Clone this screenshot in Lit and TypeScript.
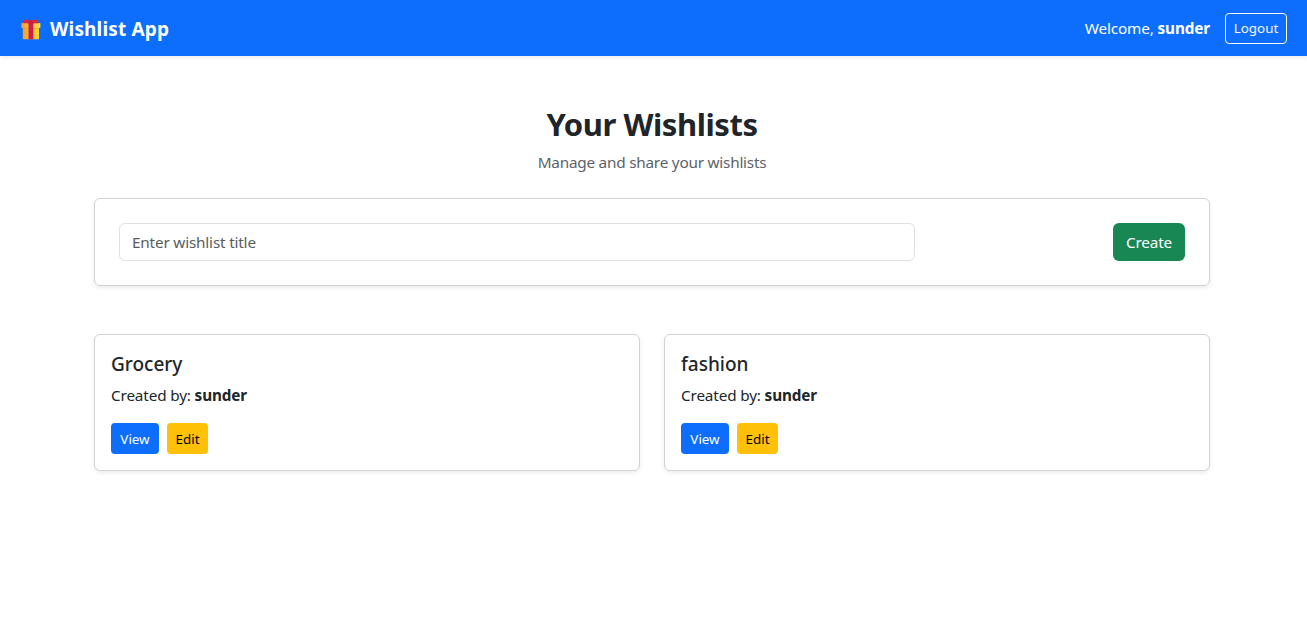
import { LitElement, html, css } from "lit";
import { customElement, property } from "lit/decorators.js";

const buttonStyles = css`
  button {
    box-sizing: border-box;
    margin: 0;
    padding: 0;
    border: 1px solid transparent;
    font-family: inherit;
    white-space: nowrap;
    cursor: pointer;
  }
  .small {
    height: 31px;
    padding-top: 1px;
    border-radius: 4px;
    font-size: 13.4px;
    line-height: 21px;
  }
`;

@customElement("gift-icon")
export class GiftIcon extends LitElement {
  static styles = css`
    :host { display: block; width: 20px; height: 21px; padding-top: 2px; }
    svg { display: block; }
  `;
  render() {
    return html`<svg width="20" height="21" viewBox="0 0 20 21" aria-hidden="true">
      <defs>
        <linearGradient id="box" x1="0" x2="1"><stop offset="0" stop-color="#f3a02f" /><stop offset="1" stop-color="#fcd72c" /></linearGradient>
        <linearGradient id="lid" x1="0" x2="1"><stop offset="0" stop-color="#f3a03a" /><stop offset="1" stop-color="#fbdc48" /></linearGradient>
      </defs>
      <rect x="1.8" y="7.5" width="16.2" height="12.8" rx="0.8" fill="url(#box)" />
      <rect x="0.4" y="4" width="19" height="5" rx="0.8" fill="url(#lid)" />
      <rect x="1.8" y="9" width="16.2" height="0.7" fill="#d98432" opacity=".6" />
      <rect x="7.5" y="4" width="4.8" height="16.3" fill="#c9214f" />
      <path d="M2.6 4.2C2.2 1.4 4-.1 6.2.7L8 1.6q2-1.2 4 0l1.8-.9c2.2-.8 4 .7 3.6 3.5z" fill="#e32434" />
      <path d="M7.5 1.8q2.4-1.2 4.8 0V5H7.5z" fill="#c71f45" />
    </svg>`;
  }
}

@customElement("wishlist-card")
export class WishlistCard extends LitElement {
  @property() heading = "";
  @property() owner = "";

  static styles = [
    buttonStyles,
    css`
      :host {
        display: block;
        box-sizing: border-box;
        height: 137px;
        padding: 17px 16px 15px;
        border: 1px solid #d2d2d3;
        border-radius: 6px;
        background: #fff;
        box-shadow: 0 2px 4px rgba(0, 0, 0, 0.075);
      }
      h5 { margin: 0 0 7px; font-size: 19px; line-height: 24px; font-weight: 500; }
      p { margin: 0 0 16px; font-size: 15.3px; line-height: 24px; letter-spacing: -0.15px; }
      .actions { display: flex; gap: 8px; }
      .view { width: 48px; background: #0d6efd; color: #fff; }
      .edit { width: 41px; background: #ffc107; color: #000; }
    `,
  ];
  render() {
    return html`<h5>${this.heading}</h5>
      <p>Created by: <strong>${this.owner}</strong></p>
      <div class="actions">
        <button class="small view">View</button>
        <button class="small edit">Edit</button>
      </div>`;
  }
}

@customElement("app-root")
export class AppRoot extends LitElement {
  private user = "sunder";
  private lists = ["Grocery", "fashion"];

  static styles = [
    buttonStyles,
    css`
      :host {
        display: block;
        min-height: 635px;
        background: #fff;
        color: #212529;
        font-family: "Noto Sans", "Open Sans", sans-serif;
        font-size: 15.3px;
        line-height: 24px;
      }
      nav {
        display: flex;
        align-items: center;
        justify-content: space-between;
        box-sizing: border-box;
        height: 56px;
        padding: 0 20px 0 21px;
        background: #0d6efd;
        color: #fff;
        box-shadow: 0 2px 4px rgba(0, 0, 0, 0.075);
      }
      .brand { display: flex; align-items: center; gap: 9px; font-size: 19px; font-weight: 700; letter-spacing: 0.17px; }
      .brand span { padding-top: 2px; }
      .session { display: flex; align-items: center; gap: 15px; }
      .welcome { letter-spacing: -0.13px; }
      .logout { width: 62px; border-color: #f8f9fa; background: transparent; color: #f8f9fa; }
      main { width: 1116px; margin: 0 auto; padding: 49px 3px 0 0; }
      header { text-align: center; }
      h2 { margin: 0 0 7px; font-size: 31px; line-height: 38px; font-weight: 700; letter-spacing: -0.45px; }
      .lead { margin: 0 0 24px; color: #5b6268; letter-spacing: -0.22px; }
      form {
        display: flex;
        align-items: center;
        justify-content: space-between;
        box-sizing: border-box;
        height: 88px;
        margin-bottom: 48px;
        padding: 0 24px;
        border: 1px solid #d2d2d3;
        border-radius: 6px;
        box-shadow: 0 2px 4px rgba(0, 0, 0, 0.075);
      }
      input {
        box-sizing: border-box;
        width: 796px;
        height: 38px;
        padding: 0 12px;
        border: 1px solid #dee2e6;
        border-radius: 6px;
        font: inherit;
        letter-spacing: -0.18px;
      }
      input::placeholder { color: #595c5f; opacity: 1; }
      .create { width: 72px; height: 38px; border-radius: 6px; background: #198754; color: #fff; font-size: 15.3px; letter-spacing: -0.2px; }
      .grid { display: grid; grid-template-columns: 1fr 1fr; gap: 24px; }
    `,
  ];
  render() {
    return html`<nav>
        <div class="brand"><gift-icon></gift-icon><span>Wishlist App</span></div>
        <div class="session">
          <span class="welcome">Welcome, <strong>${this.user}</strong></span>
          <button class="small logout">Logout</button>
        </div>
      </nav>
      <main>
        <header>
          <h2>Your Wishlists</h2>
          <p class="lead">Manage and share your wishlists</p>
        </header>
        <form @submit=${(e: Event) => e.preventDefault()}>
          <input placeholder="Enter wishlist title" />
          <button class="create">Create</button>
        </form>
        <section class="grid">
          ${this.lists.map((t) => html`<wishlist-card .heading=${t} .owner=${this.user}></wishlist-card>`)}
        </section>
      </main>`;
  }
}
